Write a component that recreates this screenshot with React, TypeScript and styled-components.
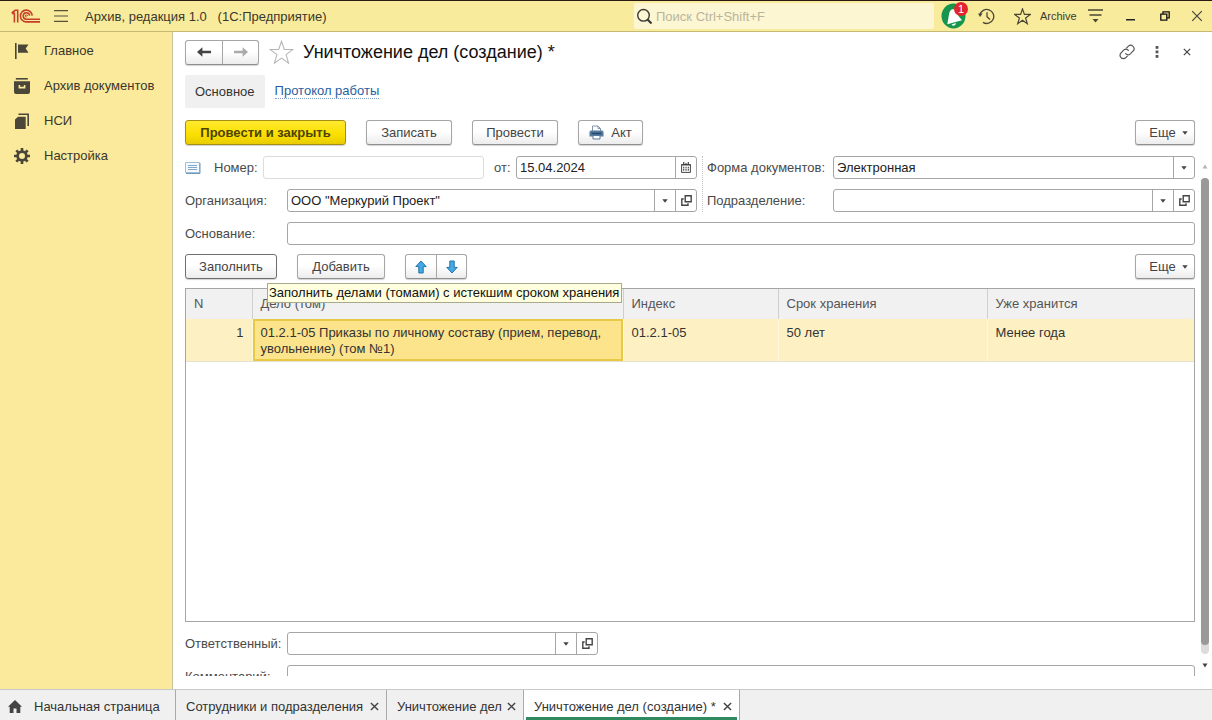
import React from 'react';
import styled, { createGlobalStyle, css } from 'styled-components';

const GlobalStyle = createGlobalStyle`
  *, *::before, *::after { box-sizing: border-box; }
  body { margin: 0; background: #fff; }
  body, button, input, select { font-family: "Liberation Sans", Arial, sans-serif; font-size: 13px; }
  button, input, select { margin: 0; color: inherit; }
  svg { display: block; flex: none; }
`;

const line = '#a6a6a6';

const Shell = styled.div`
  height: 100vh;
  display: flex;
  flex-direction: column;
  color: #333;
  overflow: hidden;
`;

/* ---------- window header ---------- */

const TitleBar = styled.header`
  flex: none;
  height: 32px;
  display: flex;
  align-items: center;
  padding: 0 0 0 11px;
  background: #f9eb9c;
  border-top: 1px solid #2b1a10;
  border-bottom: 1px solid #c6b974;
`;

const AppName = styled.span`
  flex: 1;
  padding-left: 4px;
  white-space: pre;
  color: #3a372c;
`;

const IconButton = styled.button<{ $w: number }>`
  flex: none;
  width: ${(p) => p.$w}px;
  height: 28px;
  padding: 0;
  border: 0;
  background: none;
  display: flex;
  align-items: center;
  justify-content: center;
  color: #3c3a30;
`;

const SearchBox = styled.label`
  width: 300px;
  height: 26px;
  display: flex;
  align-items: center;
  gap: 3px;
  padding-left: 2px;
  background: #fdf6d3;
  border-radius: 2px;
`;

const SearchInput = styled.input`
  flex: 1;
  min-width: 0;
  border: 0;
  padding: 0;
  background: none;
  outline: 0;
  &::placeholder { color: #b9b59c; opacity: 1; }
`;

const BellButton = styled(IconButton)`
  position: relative;
  margin-left: 5px;
`;

const Badge = styled.span`
  position: absolute;
  top: 0;
  right: 0;
  width: 14px;
  height: 14px;
  border-radius: 7px;
  background: #e0262c;
  color: #fff;
  font-size: 11px;
  line-height: 14px;
  text-align: center;
`;

const UserName = styled.a`
  width: 38px;
  font-size: 11px;
  color: #3c3a30;
  text-decoration: none;
`;

/* ---------- body ---------- */

const Body = styled.div`
  flex: 1;
  min-height: 0;
  display: flex;
`;

const Sidebar = styled.nav`
  flex: none;
  width: 173px;
  padding: 1px 0 0 13px;
  background: #fbea9c;
  border-right: 1px solid #c9c3a0;
`;

const NavLink = styled.a`
  height: 35px;
  display: flex;
  align-items: center;
  gap: 13px;
  color: #3a372c;
  text-decoration: none;
  white-space: nowrap;
`;

const Main = styled.main`
  flex: 1;
  min-width: 0;
  display: flex;
  flex-direction: column;
  padding: 7px 0 13px 12px;
`;

const TitleRow = styled.div`
  display: flex;
  align-items: center;
  height: 26px;
  padding-right: 10px;
`;

const Heading = styled.h1`
  flex: 1;
  margin: 0;
  font-size: 18px;
  font-weight: 400;
  color: #111;
`;

const face = css`
  border: 1px solid ${line};
  border-bottom-color: #8f8f8f;
  border-radius: 3px;
  background: linear-gradient(#fff, #fff 45%, #ececec);
  box-shadow: 0 1px 1px rgba(0, 0, 0, 0.18);
`;

const ButtonPair = styled.div`
  ${face}
  display: flex;
  height: 25px;
`;

const PairButton = styled.button<{ $w: number }>`
  width: ${(p) => p.$w}px;
  padding: 0;
  border: 0;
  background: none;
  display: flex;
  align-items: center;
  justify-content: center;
  & + & { border-left: 1px solid ${line}; }
`;

const Views = styled.nav`
  display: flex;
  align-items: center;
  gap: 10px;
  height: 33px;
  margin-top: 10px;
`;

const CurrentView = styled.span`
  padding: 0 10px;
  line-height: 33px;
  background: #f0f0f0;
  border-radius: 2px;
  color: #333;
`;

const ViewLink = styled.a`
  line-height: 14px;
  color: #2b61a0;
  text-decoration: none;
  border-bottom: 1px dotted #7fa0c8;
`;

const Commands = styled.div`
  position: relative;
  display: flex;
  flex: none;
  gap: 20px;
  height: 25px;
`;

const TopCommands = styled(Commands)`
  margin: 12px 17px 0 0;
`;

const TableCommands = styled(Commands)`
  margin-top: -1px;
`;

const Button = styled.button<{ $w: number; $primary?: boolean; $focus?: boolean; $last?: boolean }>`
  ${face}
  width: ${(p) => p.$w}px;
  height: 25px;
  padding: 0;
  display: flex;
  align-items: center;
  justify-content: center;
  gap: 7px;
  color: #444;
  white-space: nowrap;
  ${(p) => p.$focus && css`border-color: #6e6e6e;`}
  ${(p) => p.$last && css`margin-left: auto; padding-left: 7px; gap: 6px;`}
  ${(p) =>
    p.$primary &&
    css`
      font-weight: 700;
      color: #4d4300;
      border-color: #a39013;
      background: linear-gradient(#ffe92e, #fbdf00 60%, #e8cc00);
    `}
`;

const Scroller = styled.div`
  flex: 1;
  min-height: 0;
  display: flex;
  margin-top: 11px;
  overflow: hidden;
`;

const Form = styled.form`
  flex: 1;
  min-width: 0;
  display: flex;
  flex-direction: column;
  gap: 10px;
`;

const Columns = styled.div`
  flex: none;
  display: grid;
  grid-template-columns: minmax(0, 512fr) minmax(0, 488fr);
  column-gap: 10px;
`;

const Column = styled.div`
  display: flex;
  flex-direction: column;
  gap: 10px;
  & + & { position: relative; }
  & + &::before {
    content: "";
    position: absolute;
    left: -5px;
    top: 0;
    bottom: 0;
    border-left: 1px dotted #c4c4c4;
  }
`;

const Row = styled.div`
  flex: none;
  display: flex;
  align-items: center;
  height: 23px;
`;

const Label = styled.label<{ $w: number; $indent?: boolean }>`
  flex: none;
  width: ${(p) => p.$w}px;
  padding-left: ${(p) => (p.$indent ? 10 : 0)}px;
  white-space: nowrap;
  color: #4a4a4a;
`;

const Field = styled.div<{ $w?: number; $soft?: boolean }>`
  ${(p) => (p.$w ? css`width: ${p.$w}px;` : css`flex: 1;`)}
  min-width: 0;
  height: 23px;
  display: flex;
  border: 1px solid ${(p) => (p.$soft ? '#dcdcdc' : line)};
  border-radius: 3px;
  background: #fff;
  overflow: hidden;
`;

const TextInput = styled.input`
  flex: 1;
  min-width: 0;
  width: 100%;
  border: 0;
  padding: 0 3px;
  background: none;
  color: #222;
  outline: 0;
`;

const SelectWrap = styled.div`
  flex: 1;
  min-width: 0;
  display: grid;
  grid-template: 21px / minmax(0, 1fr) 21px;
`;

const Select = styled.select`
  grid-area: 1 / 1 / 2 / 3;
  appearance: none;
  border: 0;
  padding: 0 24px 0 3px;
  background: none;
  color: #222;
  outline: 0;
`;

const SelectArrow = styled.span`
  grid-area: 1 / 2;
  display: flex;
  align-items: center;
  justify-content: center;
  border-left: 1px solid ${line};
  pointer-events: none;
`;

const FieldButton = styled.button`
  flex: none;
  width: 21px;
  padding: 0;
  border: 0;
  border-left: 1px solid ${line};
  background: none;
  display: flex;
  align-items: center;
  justify-content: center;
`;

const Tooltip = styled.div`
  position: absolute;
  z-index: 2;
  left: 82px;
  top: 29px;
  height: 20px;
  padding: 0 2px 0 1px;
  line-height: 18px;
  white-space: nowrap;
  color: #111;
  background: #ffffdf;
  border: 1px solid #a9a98c;
`;

const TableFrame = styled.div`
  flex: 1 0 334px;
  margin-top: -1px;
  border: 1px solid ${line};
  background: #fff;
`;

const Table = styled.table`
  width: 100%;
  table-layout: fixed;
  border-collapse: collapse;
`;

const Th = styled.th`
  height: 30px;
  padding: 0 8px 2px;
  text-align: left;
  font-weight: 400;
  color: #555;
  background: #f1f1f1;
  & + & { border-left: 1px solid #cfcfcf; }
`;

const Td = styled.td<{ $num?: boolean; $active?: boolean }>`
  height: 42px;
  padding: 6px 8px 2px;
  vertical-align: top;
  text-align: ${(p) => (p.$num ? 'right' : 'left')};
  line-height: 16px;
  color: #333;
  background: ${(p) => (p.$active ? '#fce48c' : '#fdf1c4')};
  border-bottom: 1px solid #e6e2d0;
  & + & { border-left: 1px solid #fff8e0; }
  ${(p) => p.$active && css`box-shadow: inset 0 0 0 2px #e8c847;`}
`;

const ScrollBar = styled.div`
  flex: none;
  width: 8px;
  margin: 8px 3px 8px 6px;
  display: flex;
  flex-direction: column;
  align-items: center;
  gap: 9px;
`;

const Track = styled.div`
  flex: 1;
  width: 8px;
  padding-bottom: 9px;
  border-radius: 4px;
  background: #dcdcdc;
`;

const Thumb = styled.div`
  height: 100%;
  border-radius: 4px;
  background: #999;
`;

/* ---------- open windows ---------- */

const WindowBar = styled.footer`
  flex: none;
  height: 31px;
  display: flex;
  background: #f0f0f0;
  border-top: 1px solid #c9c9c9;
`;

const WindowTab = styled.div<{ $w: number; $active?: boolean }>`
  width: ${(p) => p.$w}px;
  display: flex;
  align-items: center;
  justify-content: space-between;
  padding: 2px 7px 0 10px;
  border-right: 1px solid #a9a9a9;
  white-space: nowrap;
  ${(p) =>
    p.$active &&
    css`
      background: linear-gradient(#2f8a5f, #2f8a5f) 2px 100% / calc(100% - 4px) 3px no-repeat #fff;
    `}
`;

const HomeTab = styled(WindowTab)`
  padding-left: 8px;
`;

const TabLink = styled.a`
  display: flex;
  align-items: center;
  gap: 12px;
  color: #333;
  text-decoration: none;
`;

const CloseTab = styled.button`
  width: 10px;
  height: 16px;
  padding: 0;
  border: 0;
  background: none;
  display: flex;
  align-items: center;
  justify-content: center;
`;

/* ---------- icons ---------- */

const Logo = () => (
  <svg width="30" height="16" viewBox="0 0 30 16" fill="none" stroke="#c63d28" strokeWidth="1.6">
    <path d="M.8 5.4H3.4V14.6M.8 5 4.2 2.3H6.7V14.6" />
    <path d="M21.2 7.6A5.9 5.9 0 1 0 15.4 13.9H29" />
    <path d="M18.6 7.7A3.2 3.2 0 1 0 15.4 11.2H29" />
    <path d="M16.6 8.2a1.1 1.1 0 1 0-1 .9" strokeWidth="1" />
  </svg>
);

const Caret = () => (
  <svg width="6" height="4" viewBox="0 0 6 4"><path d="M.3.3h5.4L3 3.7z" fill="#444" /></svg>
);

const OpenIcon = () => (
  <svg width="11" height="11" viewBox="0 0 11 11" fill="none" stroke="#444" strokeWidth="1.4">
    <path d="M4.2.8h6v6h-6zM2.7 4H.8v6.2H7V8.3" />
  </svg>
);

const Cross = ({ size, color = '#444', w = 1.4 }: { size: number; color?: string; w?: number }) => (
  <svg width={size} height={size} viewBox="0 0 10 10" stroke={color} strokeWidth={w}>
    <path d="M1 1l8 8M9 1l-8 8" />
  </svg>
);

const Arrow = ({ color, flip }: { color: string; flip?: boolean }) => (
  <svg width="14" height="10" viewBox="0 0 14 10">
    <path d={flip ? 'M14 5 8.6.3v3.5H0v2.4h8.6v3.5z' : 'M0 5 5.4.3v3.5H14v2.4H5.4v3.5z'} fill={color} />
  </svg>
);

const MoveArrow = ({ down }: { down?: boolean }) => (
  <svg width="12" height="14" viewBox="0 0 12 14">
    <path
      d={down ? 'M6 13 .8 7.4h3V1h4.4v6.4h3z' : 'M6 1 .8 6.6h3V13h4.4V6.6h3z'}
      fill="#45a9e6"
      stroke="#2372a6"
      strokeLinejoin="round"
    />
  </svg>
);

const Star = ({ size, color, w }: { size: number; color: string; w: number }) => (
  <svg width={size} height={size} viewBox="0 0 24 24" fill="none" stroke={color} strokeWidth={w}>
    <path d="M12 1.2l2.7 7.9H23l-6.6 5 2.4 8.1L12 17.3l-6.8 4.9 2.4-8.1L1 9.1h8.3z" />
  </svg>
);

const MenuLines = () => (
  <svg width="16" height="12" viewBox="0 0 16 12" stroke="#55513c" strokeWidth="1.2">
    <path d="M1 .6h14M1 6h14M1 11.4h14" />
  </svg>
);

const SearchIcon = () => (
  <svg width="17" height="17" viewBox="0 0 17 17" fill="none" stroke="#3b3a33" strokeWidth="1.4">
    <circle cx="7.5" cy="7.3" r="5.8" />
    <path d="M11.5 11.5 15.5 15.5" strokeWidth="2.2" />
  </svg>
);

const Bell = () => (
  <svg width="26" height="26" viewBox="0 0 26 26">
    <ellipse cx="12.5" cy="13" rx="12" ry="12.5" fill="#16964c" />
    <path d="M6.3 21.3 8 11.5C8.4 8 10 6 12.3 6.2c4 .3 4.3 4.2 5.2 6.8l3.5 4.2z" fill="#fff" />
    <path d="M10.6 21.4a2.3 2.3 0 0 0 4.3-1.4z" fill="#fff" />
  </svg>
);

const History = () => (
  <svg width="17" height="17" viewBox="0 0 17 17" fill="none" stroke="#4a4735" strokeWidth="1.3">
    <path d="M1.9 7A7 7 0 1 1 5 14.4M9 4.3v4.5l3 2.8" />
    <path d="M0 5.5h4.6L2 9z" fill="#4a4735" stroke="none" />
  </svg>
);

const ServiceMenu = () => (
  <svg width="15" height="14" viewBox="0 0 15 14" stroke="#4a4735" strokeWidth="1.3">
    <path d="M0 1h15M1.5 6h12" />
    <path d="M4.5 10h6L7.5 13.5z" fill="#4a4735" stroke="none" />
  </svg>
);

const Minimize = () => (
  <svg width="9" height="12" viewBox="0 0 9 12"><path d="M0 9h9v1.5H0z" fill="#222" /></svg>
);

const Restore = () => (
  <svg width="10" height="10" viewBox="0 0 10 10" fill="none" stroke="#111" strokeWidth="1.3">
    <path d="M.8 3.2h6v6h-6zM3 3V.8h6.2v6.1H7" />
  </svg>
);

const LinkIcon = () => (
  <svg width="16" height="16" viewBox="0 0 24 24" fill="none" stroke="#555" strokeWidth="1.8" strokeLinecap="round">
    <path d="M10 14.5a5 5 0 0 0 7 .3l4-4a5 5 0 0 0-7.2-7.2l-2.3 2.3" />
    <path d="M14 9.5a5 5 0 0 0-7-.3l-4 4a5 5 0 0 0 7.2 7.2l2.3-2.3" />
  </svg>
);

const Dots = () => (
  <svg width="4" height="12" viewBox="0 0 4 12" fill="#555">
    <rect x=".6" y="0" width="2.8" height="2.8" /><rect x=".6" y="4.5" width="2.8" height="2.8" /><rect x=".6" y="9" width="2.8" height="2.8" />
  </svg>
);

const Flag = () => (
  <svg width="18" height="18" viewBox="0 0 18 18" fill="#4a4739">
    <path d="M2 1h1.6v16H2zM5 2.5h10.5L12.7 6.5l2.8 4.3H5z" />
  </svg>
);

const ArchiveBox = () => (
  <svg width="18" height="18" viewBox="0 0 18 18" fill="#4a4739">
    <path d="M2.8 1h12v1.6h-12z" />
    <path fillRule="evenodd" d="M1 4.3h16V15a2 2 0 0 1-2 2H3a2 2 0 0 1-2-2zM5.6 8v3.6h6.8V8h-1.6v1.8H7.2V8z" />
  </svg>
);

const Copies = () => (
  <svg width="18" height="18" viewBox="0 0 18 18" fill="#4a4739">
    <path d="M5.5 1.5H16V14h-1.6V3H5.5z" />
    <path d="M5 4.7h7.7V17H2V7.5z" />
  </svg>
);

const Gear = () => (
  <svg width="18" height="18" viewBox="0 0 18 18">
    <circle cx="9" cy="9" r="4.4" fill="none" stroke="#4a4739" strokeWidth="2.8" />
    <path d="M9 1v3M9 14v3M1 9h3M14 9h3M3.3 3.3l2.2 2.2M12.5 12.5l2.2 2.2M14.7 3.3l-2.2 2.2M5.5 12.5l-2.2 2.2" stroke="#4a4739" strokeWidth="2.6" />
  </svg>
);

const Printer = () => (
  <svg width="15" height="15" viewBox="0 0 15 15">
    <path d="M3.5 6V1H9L11.5 3.5V6" fill="#fff" stroke="#8296aa" />
    <path d="M9 1v2.5h2.5" fill="none" stroke="#8296aa" />
    <path d="M2 5.5h11A1.5 1.5 0 0 1 14.5 7v4.5H.5V7A1.5 1.5 0 0 1 2 5.5z" fill="#557ba0" />
    <path d="M2.5 8.5h10" stroke="#2b4664" strokeWidth="1.6" />
    <path d="M4 10.5h7V14H4z" fill="#fff" stroke="#557ba0" />
  </svg>
);

const ListIcon = () => (
  <svg width="16" height="12" viewBox="0 0 16 12">
    <path d="M.5.5h14v10H.5z" fill="#f4f9fd" stroke="#a3bfd4" />
    <path d="M15 1v10.5H1" fill="none" stroke="#7099b8" />
    <path d="M3 3.5h9M3 5.5h9M3 7.5h9" stroke="#7fa8cc" />
  </svg>
);

const Calendar = () => (
  <svg width="10" height="11" viewBox="0 0 10 11">
    <path d="M.6 2.5h8.8v7.9H.6z" fill="#fff" stroke="#444" strokeWidth="1" />
    <path d="M.6 2.8h8.8" stroke="#444" strokeWidth="1.2" />
    <path d="M2.7 0v3M5 1v2M7.3 0v3" stroke="#444" strokeWidth="1.2" />
    <path d="M2.7 4.8V9M5 4.8V9M7.3 4.8V9" stroke="#444" strokeWidth="1.1" strokeDasharray="1.7 .6" />
  </svg>
);

const Home = () => (
  <svg width="14" height="13" viewBox="0 0 14 13" fill="#444">
    <path d="M7 0 0 6.7h1.7V13h3.8V8.5h3V13h3.8V6.7H14z" />
  </svg>
);

const ScrollTip = ({ down }: { down?: boolean }) => (
  <svg width="6" height="5" viewBox="0 0 6 5">
    <path d={down ? 'M.5.5h5L3 4.5z' : 'M.5 4.5h5L3 .5z'} fill={down ? '#444' : '#b5b5b5'} />
  </svg>
);

/* ---------- composed controls ---------- */

const Combo = ({ id, value, w, open }: { id: string; value: string; w?: number; open?: boolean }) => (
  <Field $w={w}>
    <SelectWrap>
      <Select id={id} defaultValue={value}>
        <option value={value}>{value}</option>
      </Select>
      <SelectArrow><Caret /></SelectArrow>
    </SelectWrap>
    {open && <FieldButton type="button" aria-label="Открыть"><OpenIcon /></FieldButton>}
  </Field>
);

const More = () => (
  <Button type="button" $w={60} $last>Еще <Caret /></Button>
);

const sections = [
  { text: 'Главное', icon: <Flag /> },
  { text: 'Архив документов', icon: <ArchiveBox /> },
  { text: 'НСИ', icon: <Copies /> },
  { text: 'Настройка', icon: <Gear /> },
];

const windows = [
  { text: 'Сотрудники и подразделения', w: 211 },
  { text: 'Уничтожение дел', w: 137 },
  { text: 'Уничтожение дел (создание) *', w: 216, active: true },
];

export default function App() {
  return (
    <Shell>
      <GlobalStyle />
      <TitleBar>
        <Logo />
        <IconButton $w={40} aria-label="Меню"><MenuLines /></IconButton>
        <AppName>{'Архив, редакция 1.0   (1С:Предприятие)'}</AppName>
        <SearchBox>
          <SearchIcon />
          <SearchInput type="search" aria-label="Поиск" placeholder="Поиск Ctrl+Shift+F" />
        </SearchBox>
        <BellButton $w={29} aria-label="Уведомления"><Bell /><Badge>1</Badge></BellButton>
        <IconButton $w={36} aria-label="История"><History /></IconButton>
        <IconButton $w={36} aria-label="Избранное"><Star size={17} color="#4a4735" w={1.7} /></IconButton>
        <UserName href="#user">Archive</UserName>
        <IconButton $w={34} aria-label="Сервис"><ServiceMenu /></IconButton>
        <IconButton $w={36} aria-label="Свернуть"><Minimize /></IconButton>
        <IconButton $w={34} aria-label="Восстановить"><Restore /></IconButton>
        <IconButton $w={30} aria-label="Закрыть"><Cross size={12} w={1} /></IconButton>
      </TitleBar>

      <Body>
        <Sidebar>
          {sections.map((s) => (
            <NavLink key={s.text} href="#section">{s.icon}{s.text}</NavLink>
          ))}
        </Sidebar>

        <Main>
          <TitleRow>
            <ButtonPair>
              <PairButton $w={36} aria-label="Назад"><Arrow color="#444" /></PairButton>
              <PairButton $w={36} aria-label="Вперед"><Arrow color="#aaa" flip /></PairButton>
            </ButtonPair>
            <IconButton $w={44} aria-label="В избранное"><Star size={25} color="#b5b5b5" w={1} /></IconButton>
            <Heading>Уничтожение дел (создание) *</Heading>
            <IconButton $w={30} aria-label="Ссылка"><LinkIcon /></IconButton>
            <IconButton $w={30} aria-label="Еще"><Dots /></IconButton>
            <IconButton $w={30} aria-label="Закрыть форму"><Cross size={8} w={1.5} /></IconButton>
          </TitleRow>

          <Views>
            <CurrentView>Основное</CurrentView>
            <ViewLink href="#log">Протокол работы</ViewLink>
          </Views>

          <TopCommands>
            <Button type="button" $w={161} $primary>Провести и закрыть</Button>
            <Button type="button" $w={86}>Записать</Button>
            <Button type="button" $w={86}>Провести</Button>
            <Button type="button" $w={65}><Printer />Акт</Button>
            <More />
          </TopCommands>

          <Scroller>
            <Form>
              <Columns>
                <Column>
                  <Row>
                    <Label as="span" $w={29}><ListIcon /></Label>
                    <Label htmlFor="number" $w={49}>Номер:</Label>
                    <Field $w={221} $soft><TextInput id="number" /></Field>
                    <Label htmlFor="date" $w={32} $indent>от:</Label>
                    <Field>
                      <TextInput id="date" defaultValue="15.04.2024" />
                      <FieldButton type="button" aria-label="Выбрать дату"><Calendar /></FieldButton>
                    </Field>
                  </Row>
                  <Row>
                    <Label htmlFor="org" $w={102}>Организация:</Label>
                    <Combo id="org" value={'ООО "Меркурий Проект"'} open />
                  </Row>
                </Column>
                <Column>
                  <Row>
                    <Label htmlFor="kind" $w={126}>Форма документов:</Label>
                    <Combo id="kind" value="Электронная" />
                  </Row>
                  <Row>
                    <Label htmlFor="dept" $w={126}>Подразделение:</Label>
                    <Combo id="dept" value="" open />
                  </Row>
                </Column>
              </Columns>
              <Row>
                <Label htmlFor="reason" $w={102}>Основание:</Label>
                <Field><TextInput id="reason" /></Field>
              </Row>
              <TableCommands>
                <Button type="button" $w={92} $focus aria-describedby="fill-hint">Заполнить</Button>
                <Button type="button" $w={88}>Добавить</Button>
                <ButtonPair>
                  <PairButton type="button" $w={30} aria-label="Вверх"><MoveArrow /></PairButton>
                  <PairButton type="button" $w={30} aria-label="Вниз"><MoveArrow down /></PairButton>
                </ButtonPair>
                <More />
                <Tooltip id="fill-hint" role="tooltip">Заполнить делами (томами) с истекшим сроком хранения</Tooltip>
              </TableCommands>
              <TableFrame>
                <Table>
                  <colgroup>
                    <col style={{ width: '66px' }} />
                    <col style={{ width: '371px' }} />
                    <col style={{ width: '155px' }} />
                    <col style={{ width: '209px' }} />
                    <col />
                  </colgroup>
                  <thead>
                    <tr>
                      <Th>N</Th>
                      <Th>Дело (том)</Th>
                      <Th>Индекс</Th>
                      <Th>Срок хранения</Th>
                      <Th>Уже хранится</Th>
                    </tr>
                  </thead>
                  <tbody>
                    <tr>
                      <Td $num>1</Td>
                      <Td $active>01.2.1-05 Приказы по личному составу (прием, перевод, увольнение) (том №1)</Td>
                      <Td>01.2.1-05</Td>
                      <Td>50 лет</Td>
                      <Td>Менее года</Td>
                    </tr>
                  </tbody>
                </Table>
              </TableFrame>
              <Row>
                <Label htmlFor="person" $w={102}>Ответственный:</Label>
                <Combo id="person" value="" w={311} open />
              </Row>
              <Row>
                <Label htmlFor="comment" $w={102}>Комментарий:</Label>
                <Field><TextInput id="comment" /></Field>
              </Row>
            </Form>
            <ScrollBar>
              <ScrollTip />
              <Track><Thumb /></Track>
              <ScrollTip down />
            </ScrollBar>
          </Scroller>
        </Main>
      </Body>

      <WindowBar>
        <HomeTab $w={176}>
          <TabLink href="#home"><Home />Начальная страница</TabLink>
        </HomeTab>
        {windows.map((t) => (
          <WindowTab key={t.text} $w={t.w} $active={t.active}>
            <TabLink href="#window">{t.text}</TabLink>
            <CloseTab aria-label="Закрыть вкладку"><Cross size={9} w={1.6} /></CloseTab>
          </WindowTab>
        ))}
      </WindowBar>
    </Shell>
  );
}
